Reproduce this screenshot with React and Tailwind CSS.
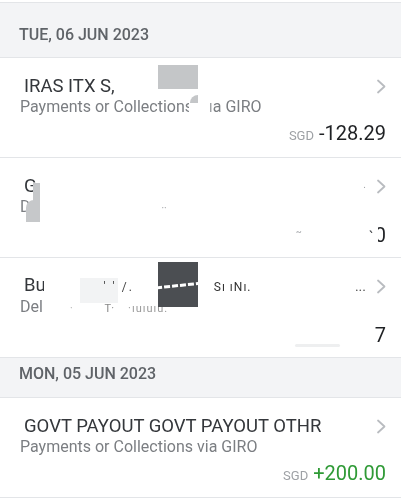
import React from 'react';

const Chevron = () => (
    <svg width="11" height="15" viewBox="0 0 11 15" className="shrink-0">
        <path d="M2 1.5 L8.5 7.5 L2 13.5" fill="none" stroke="#b9bcc0" strokeWidth="1.8" strokeLinecap="round" strokeLinejoin="round" />
    </svg>
);

function DateHeader({ label, first }) {
    return (
        <div className={`bg-[#f3f4f6] border-b border-[#e3e5e8] pl-[19px] ${first ? 'pt-[23px] pb-[13px]' : 'pt-[7px] pb-[14px]'}`}>
            <p className="text-[16px] leading-[18px] font-medium text-[#5f6368] uppercase">{label}</p>
        </div>
    );
}

function TxRow({ title, subtitle, amount, trail, children }) {
    return (
        <div className="relative h-[100px] border-b border-[#e3e5e8] pl-[20px] pr-[14px] pt-[17px]">
            <div className="flex items-center justify-between h-[22px]">
                <div className="flex items-baseline pl-[4px] text-[18.5px] leading-[22px] text-[#34373b] whitespace-nowrap">{title}</div>
                <div className="flex items-center gap-[10px]">
                    {trail}
                    <Chevron />
                </div>
            </div>
            <div className="flex items-baseline text-[16px] leading-[20px] text-[#7b7e82] whitespace-nowrap">{subtitle}</div>
            <div className="flex justify-end items-baseline gap-[5px] mt-[4px] h-[24px] pr-[1px]">
                {amount}
            </div>
            {children}
        </div>
    );
}

function Amount({ value, credit }) {
    return (
        <>
            <span className="text-[13px] text-[#9ea1a5]">SGD</span>
            <span className={`text-[20px] leading-[24px] ${credit ? 'text-[#2f9a36]' : 'text-[#1f2124]'}`}>{value}</span>
        </>
    );
}

export default function App() {
    return (
        <div className="w-[401px] h-[500px] bg-white overflow-hidden" style={{ fontFamily: 'Roboto, "Noto Sans", sans-serif' }}>
            <div className="mt-[2px] border-t border-[#e3e5e8]">
                <DateHeader label="Tue, 06 Jun 2023" first />

                {/* redacted bits are kept as they show in the capture */}
                <TxRow
                    title="IRAS ITX S,"
                    subtitle={<>Payments or Collection<span className="inline-block w-[4px] overflow-hidden">s</span><span className="ml-[20px] text-[#a0a3a6]">ı</span>a GIRO</>}
                    amount={<Amount value="-128.29" />}
                >
                    <div className="absolute left-[158px] top-[7px] w-[40px] h-[24px] bg-[#c4c6c8]" />
                    <div className="absolute left-[190px] top-[37px] w-[8px] h-[8px] bg-[#c4c6c8] rounded-tl-[8px]" />
                </TxRow>

                <TxRow
                    title="G"
                    subtitle={<>D<span className="ml-[131px] text-[10px] text-[#9a9da0]">··</span></>}
                    trail={<span className="text-[10px] text-[#9a9da0] -translate-y-[2px]">.</span>}
                    amount={
                        <>
                            <span className="text-[14px] text-[#b5b7ba] mr-[62px]">˜</span>
                            <span className="text-[14px] text-[#2f3236] leading-none">ˋ</span>
                            <span className="inline-flex justify-end w-[8px] overflow-hidden text-[20px] leading-[24px] text-[#1f2124]">0</span>
                        </>
                    }
                >
                    <div className="absolute left-[33px] top-[25px] w-[7px] h-[39px] bg-[#c6c8ca]" />
                    <div className="absolute left-[26px] top-[42px] w-[8px] h-[22px] bg-[#c6c8ca] rounded-tl-[8px]" />
                </TxRow>

                <TxRow
                    title={
                        <>
                            B<span className="inline-block w-[8px] overflow-hidden">u</span>
                            <span className="ml-[60px] text-[12px] text-[#444] tracking-[2px]">' ' /.</span>
                            <span className="ml-[80px] text-[12px] text-[#333] tracking-[1px]">Sı ıNı.</span>
                        </>
                    }
                    trail={<span className="text-[14px] leading-[14px] text-[#555]">...</span>}
                    subtitle={
                        <>
                            De<span className="inline-block w-[3px] overflow-hidden">l</span>
                            <span className="ml-[28px] text-[10px] text-[#aaa]">·</span>
                            <span className="ml-[32px] text-[11px] text-[#888]">T·</span>
                            <span className="ml-[14px] text-[11px] text-[#999] tracking-[1px]">·ıuıuıu.</span>
                        </>
                    }
                    amount={
                        <>
                            <span className="w-[45px] h-[3px] bg-[#eeeff0] rounded-full mr-[30px] self-end" />
                            <span className="text-[20px] leading-[24px] text-[#1f2124]">7</span>
                        </>
                    }
                >
                    <div className="absolute left-[80px] top-[20px] w-[38px] h-[25px] bg-[#f2f3f4] mix-blend-multiply" />
                    <div className="absolute left-[158px] top-[4px] w-[40px] h-[45px] bg-[#4b4e52] overflow-hidden">
                        <div className="absolute left-[-2px] top-[22px] w-[46px] h-[3px] border-t-[3px] border-dashed border-white -rotate-[6deg]" />
                    </div>
                </TxRow>

                <DateHeader label="Mon, 05 Jun 2023" />

                <TxRow
                    title="GOVT PAYOUT GOVT PAYOUT OTHR"
                    subtitle="Payments or Collections via GIRO"
                    amount={<Amount value="+200.00" credit />}
                />
            </div>
        </div>
    );
}
